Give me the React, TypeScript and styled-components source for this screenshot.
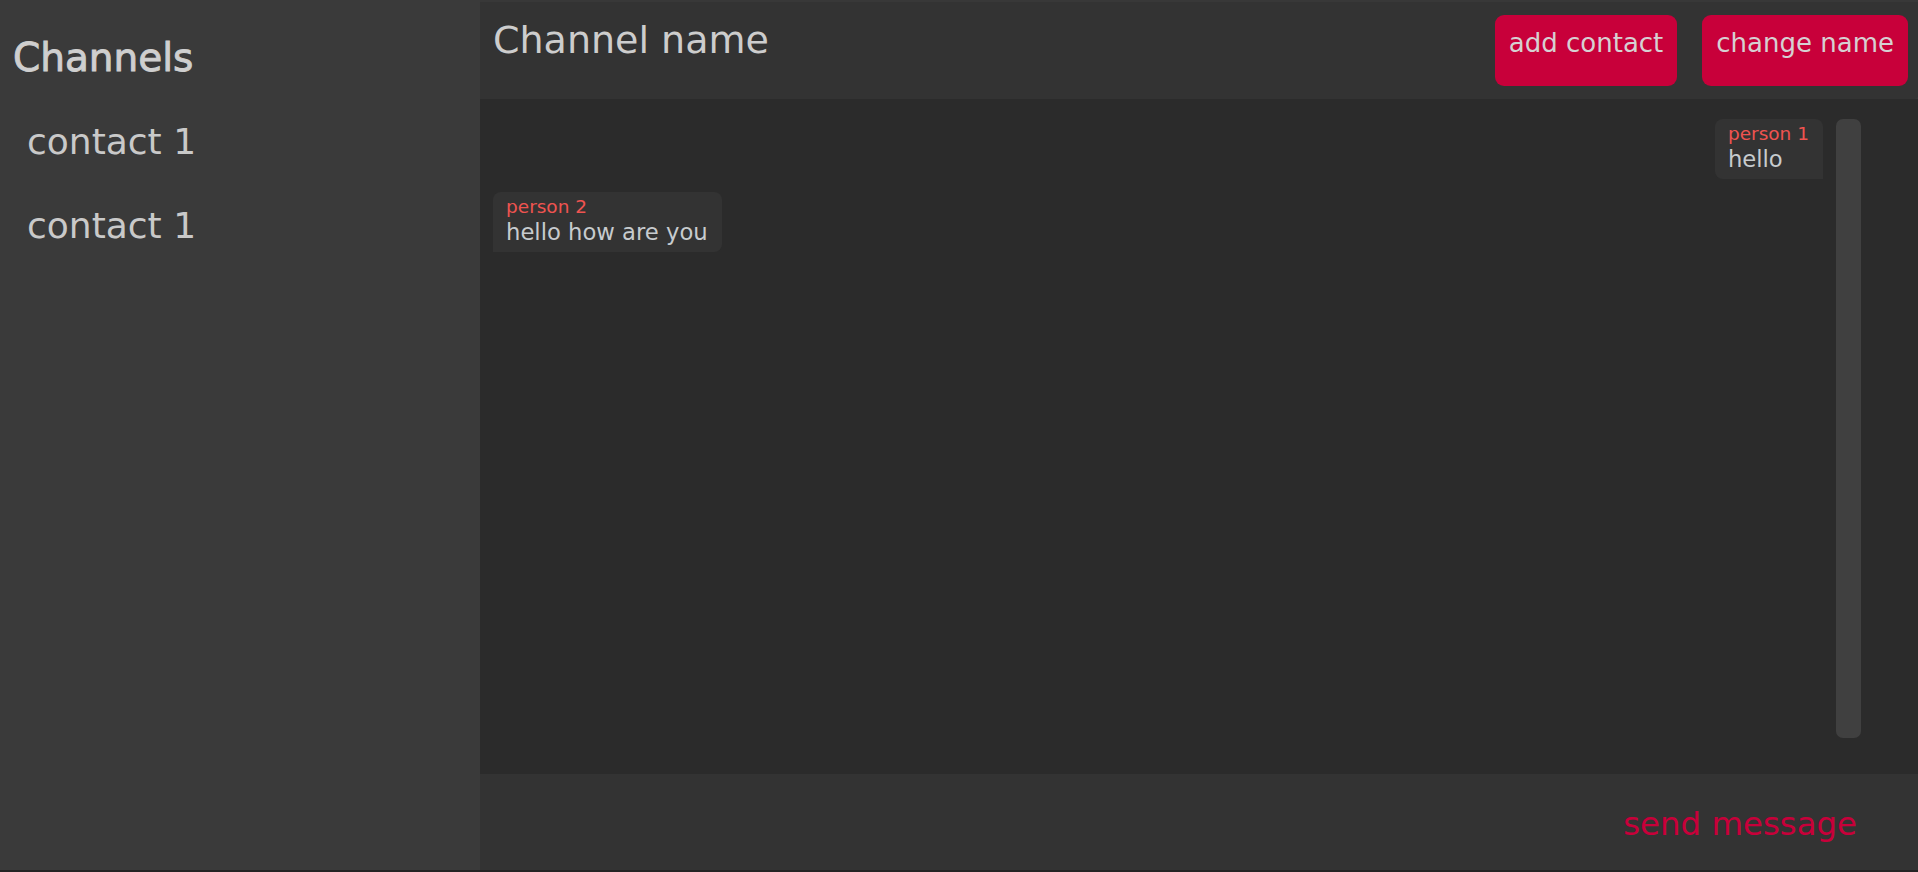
import React, { useState } from 'react';
import styled, { createGlobalStyle } from 'styled-components';

const GlobalStyle = createGlobalStyle`
  html, body {
    margin: 0;
    padding: 0;
    background: #242424;
  }
  body {
    font-family: 'Century Gothic', 'DejaVu Sans', sans-serif;
    color: #c9c9c9;
  }
`;

const contacts = ['contact 1', 'contact 1'];

const messages = [
  { id: 1, author: 'person 1', text: 'hello', mine: true },
  { id: 2, author: 'person 2', text: 'hello how are you', mine: false },
];

const App = () => {
  const [draft, setDraft] = useState('');

  return (
    <>
      <GlobalStyle />
      <Layout>
        <Sidebar>
          <SidebarTitle>Channels</SidebarTitle>
          {contacts.map((c, i) => (
            <ContactItem key={i}>{c}</ContactItem>
          ))}
        </Sidebar>
        <Main>
          <Header>
            <ChannelName>Channel name</ChannelName>
            <HeaderButtons>
              <HeaderButton>add contact</HeaderButton>
              <HeaderButton>change name</HeaderButton>
            </HeaderButtons>
          </Header>
          <ChatArea>
            <MessageList>
              {messages.map((m) => (
                <Bubble key={m.id} mine={m.mine}>
                  <Author>{m.author}</Author>
                  <MessageText>{m.text}</MessageText>
                </Bubble>
              ))}
            </MessageList>
            <ScrollTrack />
          </ChatArea>
          <Footer>
            <MessageInput
              value={draft}
              onChange={(e) => setDraft(e.target.value)}
            />
            <SendButton>send message</SendButton>
          </Footer>
        </Main>
      </Layout>
    </>
  );
};

export default App;

const Layout = styled.div`
  display: flex;
  height: 870px;
  background: #383838;
`;

const Sidebar = styled.div`
  width: 480px;
  flex-shrink: 0;
  background: #3a3a3a;
  padding: 38px 0 0 13px;
  box-sizing: border-box;
`;

const SidebarTitle = styled.h2`
  margin: 0 0 23px 0;
  font-size: 39px;
  font-weight: normal;
  -webkit-text-stroke: 0.9px #cfcfcf;
  line-height: 1;
  color: #cfcfcf;
`;

const ContactItem = styled.div`
  padding-left: 14px;
  font-size: 36px;
  line-height: 84px;
  color: #c9c9c9;
  cursor: pointer;
`;

const Main = styled.div`
  flex: 1;
  display: flex;
  flex-direction: column;
  padding-top: 2px;
`;

const Header = styled.div`
  height: 97px;
  background: #333333;
  display: flex;
  justify-content: space-between;
  align-items: flex-start;
  padding: 0 10px 0 13px;
  box-sizing: border-box;
  border-bottom-right-radius: 4px;
`;

const ChannelName = styled.h1`
  margin: 19px 0 0 0;
  font-size: 38px;
  font-weight: normal;
  line-height: 1;
  color: #cdcdcd;
`;

const HeaderButtons = styled.div`
  display: flex;
  gap: 25px;
  margin-top: 13px;
`;

const HeaderButton = styled.button`
  height: 71px;
  padding: 15px 14px 0 14px;
  box-sizing: border-box;
  display: flex;
  align-items: flex-start;
  border: none;
  border-radius: 9px;
  background: #c8003a;
  color: #d6d0d2;
  font-family: inherit;
  font-size: 26px;
  line-height: 1;
  cursor: pointer;
`;

const ChatArea = styled.div`
  flex: 1;
  background: #2b2b2b;
  display: flex;
  gap: 13px;
  padding: 20px 57px 36px 13px;
  box-sizing: border-box;
`;

const MessageList = styled.div`
  flex: 1;
  display: flex;
  flex-direction: column;
  gap: 13px;
`;

const Bubble = styled.div<{ mine: boolean }>`
  align-self: ${(p) => (p.mine ? 'flex-end' : 'flex-start')};
  background: #333333;
  padding: 4px 14px 6px 13px;
  border-radius: ${(p) => (p.mine ? '8px 8px 0 8px' : '8px 8px 8px 0')};
`;

const Author = styled.div`
  font-size: 18.5px;
  line-height: 22px;
  color: #ef5350;
`;

const MessageText = styled.div`
  font-size: 22.7px;
  line-height: 28px;
  color: #c7cbce;
`;

const ScrollTrack = styled.div`
  width: 25px;
  background: #404040;
  border-radius: 7px;
`;

const Footer = styled.div`
  height: 96px;
  background: #333333;
  display: flex;
  align-items: flex-start;
  padding: 34px 61px 0 13px;
  box-sizing: border-box;
`;

const MessageInput = styled.input`
  flex: 1;
  background: transparent;
  border: none;
  outline: none;
  color: #c9c9c9;
  font-family: inherit;
  font-size: 24px;
`;

const SendButton = styled.button`
  background: none;
  border: none;
  padding: 0;
  font-family: inherit;
  font-size: 32.4px;
  line-height: 1;
  color: #c8003a;
  cursor: pointer;
`;
